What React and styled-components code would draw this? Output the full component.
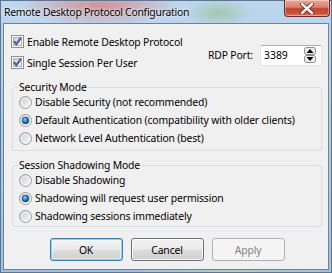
import React from 'react';
import styled, { createGlobalStyle } from 'styled-components';

const GlobalStyle = createGlobalStyle`
  html, body { margin: 0; padding: 0; }
  body {
    width: 332px; height: 273px; overflow: hidden;
    font-family: "Noto Sans", "Open Sans", sans-serif;
    font-size: 10.4px; letter-spacing: -0.15px; color: #000;
  }
`;

const Window = styled.div`
  width: 332px; height: 273px; box-sizing: border-box;
  display: flex; flex-direction: column;
  border: 1px solid #5d7590;
  padding: 0 2px 2px 2px;
  background:
    radial-gradient(ellipse 80px 18px at 30% 6px, rgba(214, 124, 122, 0.8), rgba(214,124,122,0) 100%),
    radial-gradient(ellipse 34px 14px at 66% 12px, rgba(150, 196, 150, 0.7), rgba(150,196,150,0) 100%),
    radial-gradient(ellipse 90px 10px at 70% 100%, rgba(190, 214, 150, 0.8), rgba(190,214,150,0) 100%),
    linear-gradient(180deg, #bdd6ee 0%, #a9c8e6 60%, #9fc0e2 100%);
`;

const TitleBar = styled.div`
  height: 22px; flex: none;
  display: flex; align-items: flex-start; justify-content: space-between;
`;

const Title = styled.span`
  margin: 4px 0 0 1px;
  font-size: 10.4px; line-height: 14px; letter-spacing: -0.25px;
  white-space: nowrap;
  text-shadow: 0 0 6px rgba(255,255,255,0.9), 0 0 2px rgba(255,255,255,0.8);
`;

const CloseButton = styled.div`
  width: 46px; height: 17px; box-sizing: border-box;
  margin: -1px -1px 0 0;
  border: 1px solid #6b2b25;
  border-top: none;
  border-radius: 0 0 4px 4px;
  background: linear-gradient(180deg, #e9a99a 0%, #d8806f 45%, #c0432f 55%, #c8553c 85%, #e07a55 100%);
  box-shadow: inset 0 0 0 1px rgba(255,255,255,0.35);
  display: flex; align-items: center; justify-content: center;
`;

const Client = styled.div`
  flex: 1;
  border: 1px solid #6f8296;
  background: #f0f0f0;
  padding: 11px 6px 0 7px;
  display: flex; flex-direction: column;
`;

const TopSection = styled.div`
  display: flex; justify-content: space-between; align-items: center;
`;

const CheckColumn = styled.div`
  display: flex; flex-direction: column; gap: 8px;
`;

const OptionRow = styled.label`
  display: flex; align-items: center; gap: 3px;
  height: ${p => p.$h || 13}px;
  line-height: 14px;
  white-space: nowrap;
`;

const PortGroup = styled.div`
  display: flex; align-items: center; gap: 7px;
  margin-top: 6px;
  white-space: nowrap;
`;

const PortInput = styled.div`
  width: 62px; height: 21px; box-sizing: border-box;
  background: #fff;
  border: 1px solid #e2e3ea;
  border-top-color: #abadb3;
  border-radius: 2px;
  display: flex; align-items: center; justify-content: space-between;
  padding: 0 5px 0 3px;
  letter-spacing: 0;
`;

const Spinner = styled.div`
  display: flex; flex-direction: column;
`;

const GroupBox = styled.fieldset`
  margin: ${p => p.$mt}px 0 0 1px;
  padding: 0 6px ${p => p.$pb}px 6px;
  border: 1px solid #d5dfe5;
  border-radius: 3px;
`;

const Legend = styled.legend`
  padding: 0 1px;
  margin-left: -1px;
  line-height: 12px;
`;

const RadioList = styled.div`
  display: flex; flex-direction: column;
`;

const ButtonBar = styled.div`
  display: flex; justify-content: center; gap: 8px;
  margin-top: 11px;
  padding-left: 1px;
`;

const Button = styled.div`
  width: 73px; height: 23px; box-sizing: border-box;
  border-radius: 3px;
  display: flex; align-items: center; justify-content: center;
  border: 1px solid ${p => p.$disabled ? '#adb2b5' : p.$default ? '#3c7fb1' : '#707070'};
  color: ${p => p.$disabled ? '#838383' : '#000'};
  background: ${p => p.$disabled
    ? '#f4f4f4'
    : 'linear-gradient(180deg, #f2f2f2 0%, #ebebeb 48%, #dddddd 52%, #cfcfcf 100%)'};
  box-shadow: ${p => p.$disabled ? 'none' : p.$default
    ? 'inset 0 0 0 1px #8ed0f5, inset 0 0 0 2px rgba(255,255,255,0.5)'
    : 'inset 0 0 0 1px rgba(255,255,255,0.8)'};
`;

const CheckIcon = () => (
  <svg width="13" height="13" viewBox="0 0 13 13">
    <defs>
      <linearGradient id="cbg" x1="0" y1="0" x2="1" y2="1">
        <stop offset="0" stopColor="#cbcfd5" />
        <stop offset="1" stopColor="#f6f6f6" />
      </linearGradient>
    </defs>
    <rect x="0.5" y="0.5" width="12" height="12" fill="#fff" stroke="#8e8f8f" />
    <rect x="2.5" y="2.5" width="8" height="8" fill="url(#cbg)" stroke="#aeb3b9" />
    <path d="M3 6.2 L5.3 9.2 L10 2.6" fill="none" stroke="#4a5f97" strokeWidth="2" />
  </svg>
);

const RadioIcon = ({ checked }) => (
  <svg width="13" height="13" viewBox="0 0 13 13">
    <defs>
      <linearGradient id="rbg" x1="0" y1="0" x2="1" y2="1">
        <stop offset="0" stopColor="#c9ccd1" />
        <stop offset="1" stopColor="#fbfbfb" />
      </linearGradient>
      <radialGradient id="rdot" cx="0.4" cy="0.35" r="0.7">
        <stop offset="0" stopColor="#8fd6ff" />
        <stop offset="0.5" stopColor="#2b83c8" />
        <stop offset="1" stopColor="#0d3f76" />
      </radialGradient>
    </defs>
    <circle cx="6.5" cy="6.5" r="6" fill="url(#rbg)" stroke="#9a9ca0" />
    <circle cx="6.5" cy="6.5" r="4.4" fill="none" stroke="#fff" strokeOpacity="0.6" />
    {checked && <circle cx="6.5" cy="6.5" r="3.4" fill="url(#rdot)" stroke="#1b3f66" strokeWidth="0.7" />}
  </svg>
);

const SpinArrow = ({ up }) => (
  <svg width="12" height="8" viewBox="0 0 12 8">
    <rect x="0.5" y="0.5" width="11" height="7" rx="2" fill="#ececec" stroke="#8a8a8a" />
    <path d={up ? 'M2.5 6 L6 2 L9.5 6 Z' : 'M2.5 2 L6 6 L9.5 2 Z'} fill="#000" />
  </svg>
);

const CloseGlyph = () => (
  <svg width="14" height="11" viewBox="0 0 14 11">
    <path d="M2 1 L12 10 M12 1 L2 10" stroke="#5a1d16" strokeWidth="4" strokeLinecap="round" />
    <path d="M2 1 L12 10 M12 1 L2 10" stroke="#fff" strokeWidth="2.4" strokeLinecap="round" />
  </svg>
);

export default function App() {
  return (
    <>
      <GlobalStyle />
      <Window>
        <TitleBar>
          <Title>Remote Desktop Protocol Configuration</Title>
          <CloseButton><CloseGlyph /></CloseButton>
        </TitleBar>
        <Client>
          <TopSection>
            <CheckColumn>
              <OptionRow><CheckIcon />Enable Remote Desktop Protocol</OptionRow>
              <OptionRow><CheckIcon />Single Session Per User</OptionRow>
            </CheckColumn>
            <PortGroup>
              <span>RDP Port:</span>
              <PortInput>
                <span>3389</span>
                <Spinner>
                  <SpinArrow up />
                  <SpinArrow />
                </Spinner>
              </PortInput>
            </PortGroup>
          </TopSection>

          <GroupBox $mt={12} $pb={3}>
            <Legend>Security Mode</Legend>
            <RadioList>
              <OptionRow $h={18}><RadioIcon />Disable Security (not recommended)</OptionRow>
              <OptionRow $h={18}><RadioIcon checked />Default Authentication (compatibility with older clients)</OptionRow>
              <OptionRow $h={18}><RadioIcon />Network Level Authentication (best)</OptionRow>
            </RadioList>
          </GroupBox>

          <GroupBox $mt={8} $pb={1}>
            <Legend>Session Shadowing Mode</Legend>
            <RadioList>
              <OptionRow $h={18}><RadioIcon />Disable Shadowing</OptionRow>
              <OptionRow $h={18}><RadioIcon checked />Shadowing will request user permission</OptionRow>
              <OptionRow $h={18}><RadioIcon />Shadowing sessions immediately</OptionRow>
            </RadioList>
          </GroupBox>

          <ButtonBar>
            <Button $default>OK</Button>
            <Button>Cancel</Button>
            <Button $disabled>Apply</Button>
          </ButtonBar>
        </Client>
      </Window>
    </>
  );
}
